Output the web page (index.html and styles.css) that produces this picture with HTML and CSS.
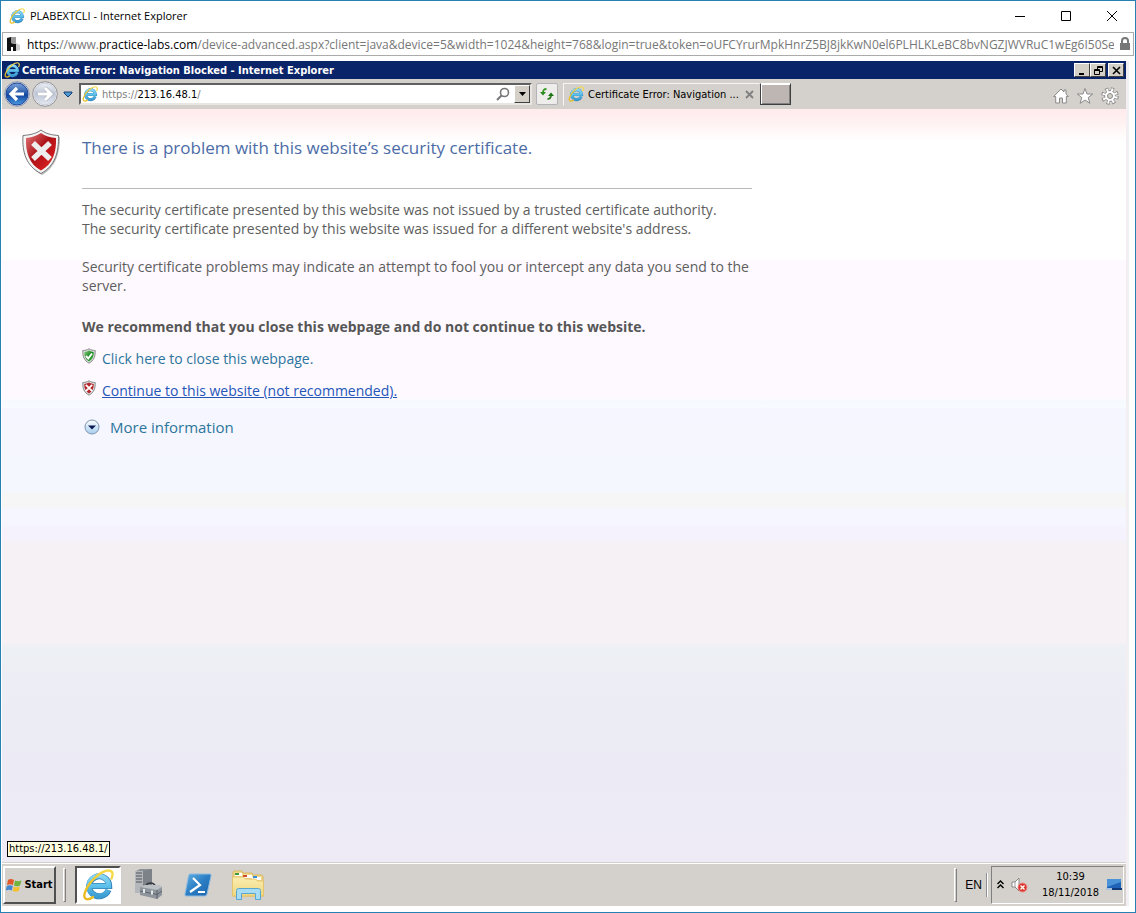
FILE: index.html
```html
<!DOCTYPE html>
<html lang="en">
<head>
<meta charset="utf-8">
<title>PLABEXTCLI - Internet Explorer</title>
<link rel="stylesheet" href="styles.css">
</head>
<body>
<svg class="defs" aria-hidden="true">
  <defs>
    <linearGradient id="g-e" x1="0" y1="0" x2="0" y2="1"><stop offset="0" stop-color="#8ad6f4"/><stop offset=".5" stop-color="#5cc0ea"/><stop offset="1" stop-color="#3c9dd2"/></linearGradient>
    <linearGradient id="g-halo" x1="0" y1="1" x2="1" y2="0"><stop offset="0" stop-color="#e9b81c"/><stop offset="1" stop-color="#f8dc4c"/></linearGradient>
    <linearGradient id="g-back" x1="0" y1="0" x2="0" y2="1"><stop offset="0" stop-color="#7ea3da"/><stop offset=".45" stop-color="#2a5cab"/><stop offset=".55" stop-color="#12459c"/><stop offset="1" stop-color="#4d9be4"/></linearGradient>
    <linearGradient id="g-fwd" x1="0" y1="0" x2="0" y2="1"><stop offset="0" stop-color="#eceef3"/><stop offset=".5" stop-color="#bcc5d6"/><stop offset="1" stop-color="#e6eaf2"/></linearGradient>
    <linearGradient id="g-red" x1="0" y1="0" x2="1" y2="1"><stop offset="0" stop-color="#e27a7a"/><stop offset=".45" stop-color="#ad1218"/><stop offset=".7" stop-color="#c8181c"/><stop offset="1" stop-color="#e0342c"/></linearGradient>
    <linearGradient id="g-green" x1="0" y1="0" x2="1" y2="1"><stop offset="0" stop-color="#8fcf86"/><stop offset=".5" stop-color="#1d8a26"/><stop offset="1" stop-color="#47b848"/></linearGradient>
    <linearGradient id="g-ps" x1="0" y1="0" x2="1" y2="1"><stop offset="0" stop-color="#63b0e4"/><stop offset=".5" stop-color="#2b7ec4"/><stop offset="1" stop-color="#1c62aa"/></linearGradient>
    <linearGradient id="g-folder" x1="0" y1="0" x2="0" y2="1"><stop offset="0" stop-color="#fbeeb0"/><stop offset="1" stop-color="#f0d67e"/></linearGradient>
    <linearGradient id="g-more" x1="0" y1="0" x2="0" y2="1"><stop offset="0" stop-color="#ffffff"/><stop offset="1" stop-color="#a4cdee"/></linearGradient>
  </defs>
  <symbol id="ie" viewBox="0 0 32 32">
    <path d="M26.500 21A10 10 0 1 1 27.200 17H9" fill="none" stroke="#3587bd" stroke-width="6"/>
    <path d="M26 21A10 10 0 1 1 26.800 17H9" fill="none" stroke="url(#g-e)" stroke-width="4.600"/>
    <path d="M11 28C5 32.500 0 30 3.500 22 8 11 20 1.500 26.500 1.500c5 0 4.500 4.500 3 8" fill="none" stroke="url(#g-halo)" stroke-width="2.400" stroke-linecap="round"/>
  </symbol>
  <symbol id="shield-x" viewBox="0 0 38 46">
    <path d="M20 2C15 6 8 7 2 7c-1 17 3 31 18 39C34 38 38 24 38 8 30 7 24 6 20 2z" fill="#8b8b8b" opacity=".6"/>
    <path d="M19 1C14 5 7 6 1 6.500 0 23 4 37 19 44.500 33 37 37 23 36.500 6.500 30 6 24 5 19 1z" fill="#f4f4f4" stroke="#777" stroke-width="1"/>
    <path d="M19 4C14 7 9 8.500 4 9c-.5 14 3 26 15 32.500C31 35 34.500 23 34 9 28.500 8.500 23 7 19 4z" fill="url(#g-red)"/>
    <path d="M11 14l17 16M28 14L11 30" stroke="#eee" stroke-width="5.500"/>
  </symbol>
  <symbol id="shield-x-small" viewBox="0 0 14 16">
    <path d="M7 .8C5 2 3 2.500.8 2.500.5 8 2 12.500 7 15.200 12 12.500 13.500 8 13.200 2.500 11 2.500 9 2 7 .8z" fill="#ddd" stroke="#8a8a8a"/>
    <path d="M7 2.500C5.500 3.400 4 3.800 2.300 4 2 8 3.500 11.500 7 13.600 10.500 11.500 12 8 11.700 4 10 3.800 8.500 3.400 7 2.500z" fill="#b3282c"/>
    <path d="M3.800 4.800l6.400 6.400M10.200 4.800l-6.400 6.400" stroke="#fff" stroke-width="1.800"/>
  </symbol>
  <symbol id="shield-ok" viewBox="0 0 14 16">
    <path d="M7 .8C5 2 3 2.500.8 2.500.5 8 2 12.500 7 15.200 12 12.500 13.500 8 13.200 2.500 11 2.500 9 2 7 .8z" fill="#ddd" stroke="#8a8a8a"/>
    <path d="M7 2.500C5.500 3.400 4 3.800 2.300 4 2 8 3.500 11.500 7 13.600 10.500 11.500 12 8 11.700 4 10 3.800 8.500 3.400 7 2.500z" fill="url(#g-green)"/>
    <path d="M4 8l2.200 2.500L10 5.500" fill="none" stroke="#fff" stroke-width="1.900"/>
  </symbol>
</svg>

<div class="window">
  <header class="titlebar">
    <svg class="ic16"><use href="#ie"/></svg>
    <span class="titlebar-text">PLABEXTCLI - Internet Explorer</span>
    <div class="caption">
      <button aria-label="Minimize"><svg width="12" height="12"><path d="M1 6.500h10" stroke="#000"/></svg></button>
      <button aria-label="Maximize"><svg width="12" height="12"><path d="M1.500 1.500h9v9h-9z" fill="none" stroke="#000"/></svg></button>
      <button aria-label="Close"><svg width="12" height="12"><path d="M1 1l10 10M11 1L1 11" stroke="#000"/></svg></button>
    </div>
  </header>

  <div class="address">
    <svg width="15" height="16"><path d="M0 2l4-1v6l5 1v7H6v-4H4v4H0z" fill="#111"/><path d="M4 1h5v7L4 7z" fill="#999"/><path d="M9 7l4 2v5l-4 1z" fill="#ccc"/></svg>
    <div class="url"><b>https:</b>//www.<b>practice-labs.com</b>/device-advanced.aspx?client=java&amp;device=5&amp;width=1024&amp;height=768&amp;login=true&amp;token=oUFCYrurMpkHnrZ5BJ8jkKwN0el6PLHLKLeBC8bvNGZJWVRuC1wEg6I50SeV0P3b</div>
    <svg width="12" height="14"><path d="M3 7V4a3 3 0 0 1 6 0v3" fill="none" stroke="#777" stroke-width="2"/><path d="M1 6h10v7H1z" fill="#777"/></svg>
  </div>

  <div class="screen">
    <div class="rtitle">
      <svg class="ic16"><use href="#ie"/></svg>
      <span>Certificate Error: Navigation Blocked - Internet Explorer</span>
      <div class="rcaption">
        <button aria-label="Minimize window"><svg width="11" height="9"><path d="M2 7h5v2H2z"/></svg></button>
        <button aria-label="Restore window"><svg width="11" height="9"><path d="M4.500 3V.5h5v5H7M4 1.500h6M1.500 3.500h5v5h-5zM1 4.500h6" fill="none" stroke="#000"/></svg></button>
        <button class="rclose" aria-label="Close window"><svg width="11" height="9"><path d="M2 1l7 7M9 1L2 8" stroke="#000" stroke-width="1.600"/></svg></button>
      </div>
    </div>

    <div class="toolbar">
      <button class="nav" aria-label="Back"><svg width="26" height="26"><circle cx="13" cy="13" r="12.300" fill="#e9edf5" stroke="#8793ab"/><circle cx="13" cy="13" r="11" fill="url(#g-back)" stroke="#20479a"/><path d="M20 13H8M13 7l-6 6 6 6" fill="none" stroke="#fff" stroke-width="3.200"/></svg></button>
      <button class="nav" aria-label="Forward"><svg width="26" height="26"><circle cx="13" cy="13" r="12.300" fill="#f2f2f4" stroke="#8f8f96"/><circle cx="13" cy="13" r="10.800" fill="url(#g-fwd)" stroke="#c9ced8"/><path d="M6 13h12M13 7l6 6-6 6" fill="none" stroke="#a8adb8" stroke-width="4.200"/><path d="M6 13h12M13 7l6 6-6 6" fill="none" stroke="#fff" stroke-width="3"/></svg></button>
      <button class="recent" aria-label="Recent pages"><svg width="10" height="7"><path d="M1 1h8v1L5 6 1 2z" fill="#4c9bd0" stroke="#173f77"/></svg></button>
      <div class="raddr">
        <svg class="ic16"><use href="#ie"/></svg>
        <div class="raddr-text">https://<b>213.16.48.1</b>/</div>
        <svg width="14" height="14"><circle cx="8.500" cy="5.500" r="4" fill="none" stroke="#777" stroke-width="1.600"/><path d="M5.500 8.500L1 13" stroke="#777" stroke-width="2"/></svg>
        <button class="drop" aria-label="Show address list"><svg width="7" height="4"><path d="M0 0h7L3.500 4z"/></svg></button>
      </div>
      <button class="refresh" aria-label="Refresh"><svg width="16" height="16"><path d="M7.500 3C5 3 4 4 4 7" fill="none" stroke="#3c9a28" stroke-width="1.800"/><path d="M1 6h6L4 9.500z" fill="#2d8a20"/><path d="M8.500 13c2.500 0 3.500-1 3.500-4" fill="none" stroke="#2b7d20" stroke-width="1.800"/><path d="M9 10h6l-3-3.500z" fill="#1f7317"/></svg></button>
      <div class="tab">
        <svg class="ic16"><use href="#ie"/></svg>
        <span>Certificate Error: Navigation ...</span>
        <button aria-label="Close tab"><svg width="9" height="9"><path d="M1 1l7 7M8 1L1 8" stroke="#808080" stroke-width="1.800"/></svg></button>
      </div>
      <button class="newtab" aria-label="New tab"></button>
      <div class="tools">
        <button aria-label="Home"><svg width="16" height="16"><path d="M8 1L.7 8.500h2V15H6.500v-5h3v5h3.800V8.500h2L13 6V2h-2v2z" fill="#fff" stroke="#8a8a8a"/></svg></button>
        <button aria-label="Favorites"><svg width="18" height="18"><path d="M9 1.500l2 5.500h5.700l-4.500 3.600 1.700 5.700L9 13l-4.900 3.300 1.700-5.700L1.300 7H7z" fill="#fff" stroke="#8a8a8a"/></svg></button>
        <button aria-label="Tools"><svg width="18" height="18" viewBox="-9 -9 18 18"><circle r="6.500" fill="none" stroke="#8a8a8a" stroke-width="4.600" stroke-dasharray="2.900 2.200"/><circle r="5.400" fill="#fff" stroke="#8a8a8a"/><circle r="6" fill="none" stroke="#fff" stroke-width="3.600" stroke-dasharray="1.700 3.012" stroke-dashoffset="-.5"/><circle r="2.500" fill="#d4d0c8" stroke="#8a8a8a"/></svg></button>
      </div>
    </div>

    <main class="page">
      <svg class="big-shield"><use href="#shield-x"/></svg>
      <div class="content">
        <h1>There is a problem with this website’s security certificate.</h1>
        <p>The security certificate presented by this website was not issued by a trusted certificate authority.<br>The security certificate presented by this website was issued for a different website's address.</p>
        <p>Security certificate problems may indicate an attempt to fool you or intercept any data you send to the server.</p>
        <p class="advice">We recommend that you close this webpage and do not continue to this website.</p>
        <div class="choice"><svg class="small-shield"><use href="#shield-ok"/></svg><a href="#close">Click here to close this webpage.</a></div>
        <div class="choice"><svg class="small-shield"><use href="#shield-x-small"/></svg><a class="hot" href="#continue">Continue to this website (not recommended).</a></div>
        <button class="more"><svg width="16" height="16"><circle cx="8" cy="8" r="7" fill="url(#g-more)" stroke="#7f95ad"/><path d="M4 6.500h8L8 10.500z" fill="#0c1a50"/></svg>More information</button>
      </div>
      <div class="status">https://213.16.48.1/</div>
    </main>

    <footer class="taskbar">
      <button class="start"><svg width="17" height="16"><path d="M2 3c2-1.500 4-1 6 0L7 8C5 7 3 7 1 8z" fill="#e2582a"/><path d="M9 3.500c2 1 4 1 6.500 0L14 8.500c-2 1-4 .8-6 0z" fill="#6fb33c"/><path d="M.8 9c2-1 4-1 6 0l-1 4.500c-2-1-4-1-6 0z" fill="#4486d0"/><path d="M7.800 9.500c2 1 4 1 6 0l-1 4.500c-2 1-4 1-6 0z" fill="#f4c030"/></svg>Start</button>
      <i class="grip"></i>
      <button class="task active" aria-label="Internet Explorer"><svg width="32" height="32"><use href="#ie"/></svg></button>
      <button class="task" aria-label="Server Manager"><svg width="30" height="32"><path d="M3 2l4-2h12v18l-3 6H3z" fill="#8c9196"/><path d="M2 2h8v22H2z" fill="#b4b8bc"/><path d="M3 4h6M3 7h6M3 10h6M3 13h6" stroke="#50555a"/><path d="M10 2l9-2v18h-9z" fill="#7d8288"/><path d="M13 17c1-4 8-4 9 0" fill="none" stroke="#33383e" stroke-width="1.600"/><path d="M7 18l5-2h14l3 2v8l-5 4-17-4z" fill="#8e959c"/><path d="M7 18l5-2h14l3 2-5 3z" fill="#bcc1c6"/><path d="M7 22l17 3.500 5-3.500M24 21v9" fill="none" stroke="#5c636a"/><path d="M10 20h2v4h-2zM18 21.500h2v4h-2z" fill="#e4e7ea"/></svg></button>
      <button class="task" aria-label="PowerShell"><svg width="28" height="26"><path d="M6 2h20q1.500 0 1 2l-4 18q-.5 2-2 2H2q-1.500 0-1-2L4.500 4Q5 2 6 2z" fill="url(#g-ps)" stroke="#8dbbe0"/><path d="M9 6l7 7L6 20M14 20h7" fill="none" stroke="#fff" stroke-width="2.200"/></svg></button>
      <button class="task" aria-label="Windows Explorer"><svg width="34" height="32"><path d="M3 2h8l1 2h9l1 2h8q2 0 2 2v19H2V3z" fill="#efd88c" stroke="#d8b860"/><path d="M4 4h7v3H4zM12 6h9v3h-9zM21 8h9v3h-9z" fill="#fff"/><path d="M4 4h4v2H4z" fill="#3c9a3c"/><path d="M12 6h4v2h-4z" fill="#d04a2c"/><path d="M22 7h4v2h-4z" fill="#3b8dd0"/><path d="M1.500 8h11l2 2h10l2 2h6v15h-31z" fill="url(#g-folder)" stroke="#e3c36c"/><path d="M5.500 30.500v-9q0-2 2-2h20q2 0 2 2v9h-5v-6h-14v6z" fill="#a8dcf2" stroke="#5ba6cd"/></svg></button>
      <i class="grip right"></i>
      <span class="lang">EN</span>
      <i class="divider"></i>
      <div class="tray">
        <button aria-label="Show hidden icons"><svg width="7" height="9"><path d="M.5 4l3-3 3 3M.5 8l3-3 3 3" fill="none" stroke="#000" stroke-width="1.400"/></svg></button>
        <svg width="17" height="16"><path d="M1 5h3l4-4v13l-4-4H1z" fill="#fff" stroke="#888"/><path d="M4 5v5" stroke="#999"/><circle cx="11.500" cy="10.500" r="4.500" fill="#d9372c" stroke="#e88"/><path d="M9.500 8.500l4 4M13.500 8.500l-4 4" stroke="#fff" stroke-width="1.400"/></svg>
        <div class="clock">10:39<br>18/11/2018</div>
        <svg width="16" height="13"><path d="M1 1h14v9H1z" fill="#1e63b8"/><path d="M1 1h14v3L1 9z" fill="#4b93d8"/><path d="M0 10h6v2H0z" fill="#aac4e0"/><path d="M6 10h10v2H6z" fill="#123a78"/></svg>
      </div>
    </footer>
  </div>
</div>
</body>
</html>
```
FILE: styles.css
```css
* { box-sizing: border-box; }
body { margin: 0; font-family: "Open Sans", sans-serif; font-size: 12px; color: #000; }
button { font: inherit; color: inherit; margin: 0; padding: 0; border: 0; background: none; display: flex; align-items: center; justify-content: center; }
svg { display: block; flex: none; }
.defs { position: absolute; width: 0; height: 0; }
.ic16 { width: 16px; height: 16px; }

.window { min-height: 100vh; display: flex; flex-direction: column; border: 1px solid #2581b4; background: #fff; }
.titlebar { height: 31px; display: flex; align-items: center; gap: 5px; padding: 0 0 2px 8px; }
.titlebar-text { font-size: 11px; }
.caption { margin-left: auto; display: flex; height: 28px; }
.caption button { width: 46px; }

.address { height: 24px; margin: 0 1px; border: 1px solid #ababab; display: flex; align-items: center; padding: 0 2px 0 4px; gap: 5px; }
.url { flex: 1; min-width: 0; overflow: hidden; white-space: nowrap; color: #777; }
.url b { font-weight: 400; color: #000; }

.screen { flex: 1; margin: 5px 6px 6px 1px; border-right: 3px solid #f2eef2; display: flex; flex-direction: column; font-family: "DejaVu Sans Condensed", "DejaVu Sans", sans-serif; font-size: 11px; }
.rtitle { height: 18px; background: #0a246a; color: #fff; font-weight: 700; display: flex; align-items: center; padding: 0 2px; gap: 2px; }
.rcaption { margin-left: auto; display: flex; }
.rcaption button { width: 16px; height: 14px; background: #d4d0c8; border: 1px solid; border-color: #fff #404040 #404040 #fff; }
.rcaption .rclose { margin-left: 2px; }

.toolbar { height: 30px; background: #d4d0cb; display: flex; align-items: center; padding: 0 7px 0 1px; }
.nav { width: 28px; }
.recent { width: 18px; margin-right: 2px; }
.raddr { width: 453px; height: 22px; background: #fff; border: 2px solid; border-color: #606060 #e8e6e2 #e8e6e2 #606060; display: flex; align-items: center; gap: 4px; padding-left: 1px; }
.raddr-text { flex: 1; color: #808080; }
.raddr-text b { color: #000; font-weight: 400; }
.drop { width: 16px; height: 18px; background: #d4d0c8; border: 1px solid; border-color: #fff #404040 #404040 #fff; }
.refresh { width: 22px; height: 22px; margin-left: 4px; border: 1px solid #b3b3b8; background: #eeedec; border-radius: 2px; }
.tab { width: 197px; height: 23px; margin-left: 5px; border: 1px solid; border-color: #f5f5f3 transparent transparent #f5f5f3; display: flex; align-items: center; gap: 4px; padding: 0 5px 0 4px; }
.tab span { white-space: nowrap; flex: 1; }
.newtab { width: 31px; height: 22px; background: #beb6b2; border: 1px solid; border-color: #fff #404040 #404040 #404040; box-shadow: inset 1px 1px #fff, inset -1px -1px #808080; }
.tools { margin-left: auto; display: flex; align-items: center; gap: 7px; padding-top: 4px; }

.page { flex: 1; position: relative; display: flex; align-items: flex-start; gap: 22px; padding: 20px 20px 0; font-family: "Open Sans", sans-serif; font-size: 14px; line-height: 19px; color: #5e5e5e; background: linear-gradient(#ffebec 0, #fff2f2 14px, #fff 32px, #fff 151px, #fdf9ff 151px, #fdf9ff 289px, #f6fafe 292px, #f8fbff 298px, #f5f6ff 300px, #f5f7fe 382px, #f5f6f5 386px, #f5f6f5 398px, #f5f6ff 400px, #f5f6ff 415px, #f5f2fd 420px, #f5f2fd 430px, #f6f1f5 434px, #f6f1f4 533px, #edf0f5 538px, #edeff5 560px, #ecedf5 570px, #ecebf5 660px, #eeebf6 100%); }
.big-shield { width: 38px; height: 46px; }
.content { flex: 0 1 684px; display: flex; flex-direction: column; align-items: flex-start; }
h1 { margin: 0 0 11px; width: 100%; max-width: 670px; padding: 6px 0 27px; border-bottom: 1px solid #b9b9bc; font-size: 17px; line-height: 26px; font-weight: 400; color: #4c6ca6; }
p { margin: 0 0 19px; }
.advice { margin: 3px 0 12px; font-weight: 700; color: #565656; }
.choice { display: flex; gap: 6px; margin-bottom: 12px; }
.small-shield { width: 14px; height: 16px; }
a { color: #2d759c; text-decoration: none; }
.choice a { padding-top: 1px; }
.choice .hot { color: #2456b8; text-decoration: underline; }
.more { margin: 4px 0 0 2px; gap: 10px; font-size: 15px; line-height: 22px; color: #2d759c; }
.status { position: absolute; left: 5px; bottom: 5px; padding: 0 1px; border: 1px solid #000; background: #ffffe1; color: #000; font: 11px/14px "DejaVu Sans Condensed", sans-serif; }

.taskbar { height: 44px; background: #d4d0cb; border-top: 1px solid #d4d0cb; box-shadow: inset 0 1px #fff; display: flex; align-items: center; padding: 0 2px 0 1px; }
.start { width: 53px; height: 38px; font-weight: 700; border: 2px solid; border-color: #fff #505050 #505050 #fff; gap: 1px; }
.grip { width: 3px; height: 34px; margin: 0 9px 0 7px; border: 1px solid; border-color: #fff #808080 #808080 #fff; }
.grip.right { margin: 0 8px 0 auto; }
.task { width: 46px; height: 38px; margin-right: 4px; border: 1px solid transparent; }
.active { background: #fff; border: 2px solid; border-color: #505050 #fff #fff #505050; }
.lang { font-family: "Liberation Sans", sans-serif; font-size: 12px; }
.divider { width: 2px; height: 24px; margin: 0 3px 0 4px; border-left: 1px solid #909090; border-right: 1px solid #fff; }
.tray { height: 38px; border: 1px solid; border-color: #808080 #fff #fff #808080; display: flex; align-items: center; padding: 0 1px 0 5px; gap: 7px; }
.clock { text-align: center; line-height: 16px; margin-left: 7px; }
```
